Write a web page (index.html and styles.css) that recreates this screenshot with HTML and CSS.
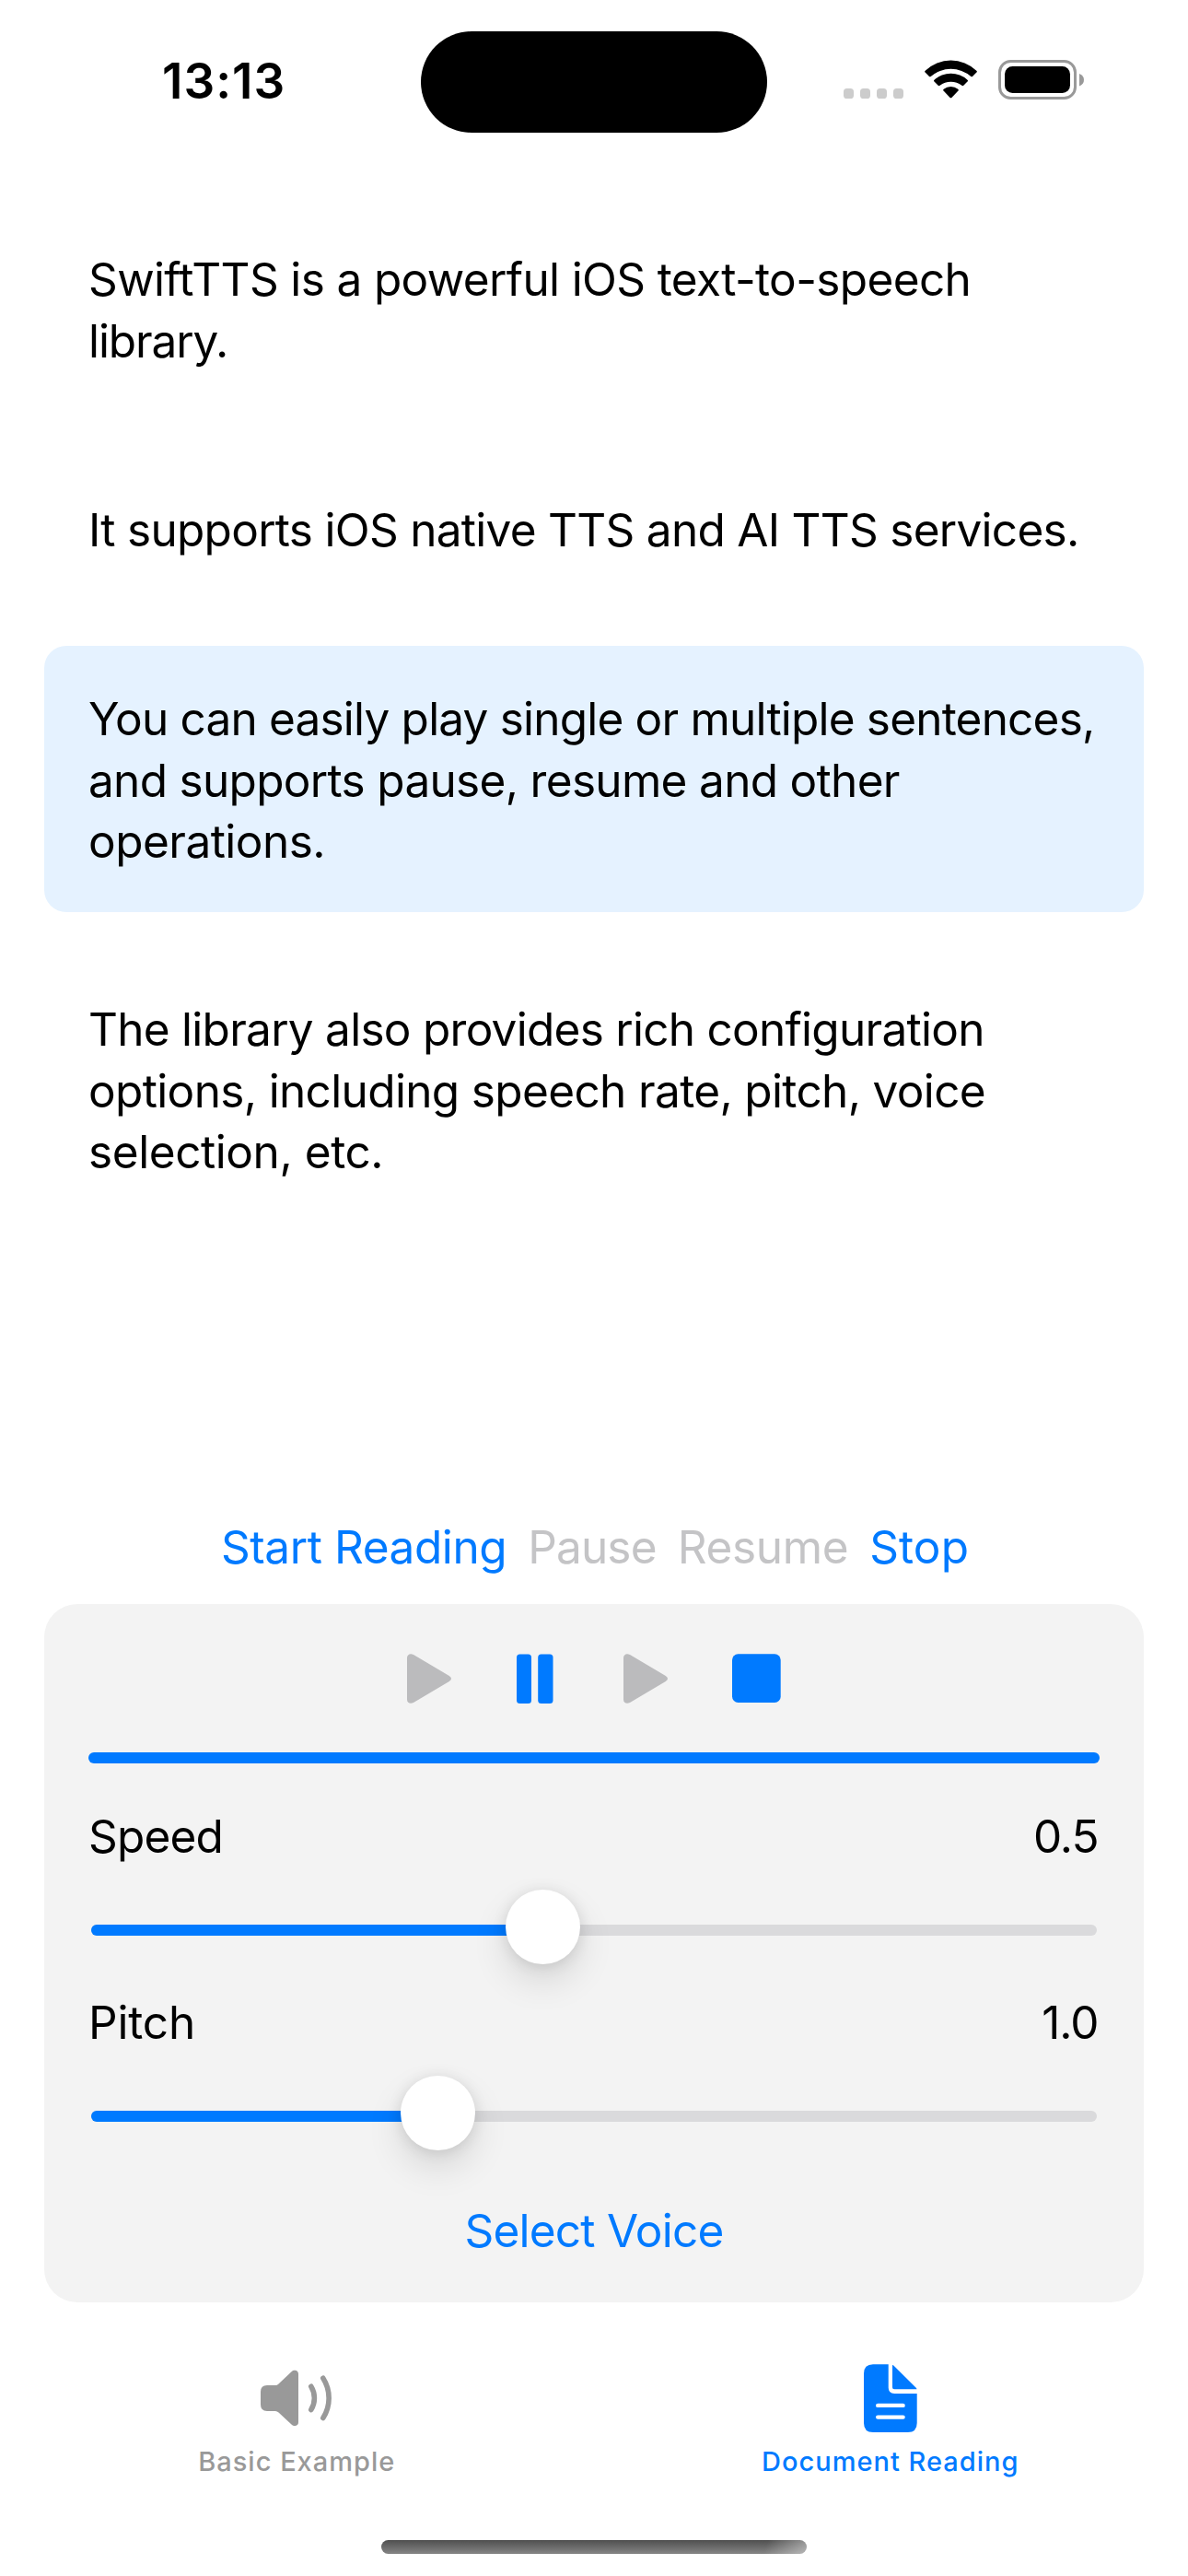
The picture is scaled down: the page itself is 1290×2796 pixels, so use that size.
FILE: index.html
```html
<!DOCTYPE html>
<html lang="en">
<head>
<meta charset="utf-8">
<title>SwiftTTS</title>
<link rel="stylesheet" href="styles.css">
</head>
<body>
<div class="screen">
  <header class="status">
    <div class="time">13:13</div>
    <div class="island"></div>
    <div class="indicators">
      <svg class="dots" width="65" height="11" viewBox="0 0 65 11"><g fill="#ccc"><rect width="11" height="11" rx="3.6"/><rect x="18" width="11" height="11" rx="3.6"/><rect x="36" width="11" height="11" rx="3.6"/><rect x="54" width="11" height="11" rx="3.6"/></g></svg>
      <svg class="wifi" width="57" height="42" viewBox="0 0 57 42"><path d="M.6 13.6Q-.4 12.6.7 11.700A40 40 0 0 1 56.300 11.700Q57.400 12.600 56.400 13.600L52 17.900Q51.200 18.600 50.300 17.900A33.500 33.500 0 0 0 6.700 17.900Q5.800 18.600 5 17.900Z"/><path d="M10.500 23.600Q9.500 22.600 10.500 21.700A27 27 0 0 1 46.500 21.700Q47.500 22.600 46.500 23.600L42.300 27.800Q41.400 28.600 40.400 27.800A19.500 19.500 0 0 0 16.600 27.800Q15.600 28.600 14.700 27.800Z"/><path d="M20.500 33.600Q19.600 32.600 20.700 31.700A12.500 12.500 0 0 1 36.300 31.700Q37.400 32.600 36.500 33.600L29.400 40.900Q28.500 41.700 27.600 40.900Z"/></svg>
      <svg class="battery" width="93" height="43" viewBox="0 0 93 43"><rect x="1.500" y="1.500" width="82" height="40" rx="12" fill="none" stroke="#999" stroke-width="3"/><rect x="7" y="7" width="71" height="29" rx="8.500"/><path d="M88 15Q93 17 93 21.700T88 28.400Z" fill="#999"/></svg>
    </div>
  </header>

  <main class="document">
    <p class="sentence two"><span class="line l1">SwiftTTS is a powerful iOS text-to-speech</span><span class="line l2">library.</span></p>
    <p class="sentence one"><span class="line l3">It supports iOS native TTS and AI TTS services.</span></p>
    <p class="sentence three active"><span class="line l4">You can easily play single or multiple sentences,</span><span class="line l5">and supports pause, resume and other</span><span class="line l6">operations.</span></p>
    <p class="sentence three"><span class="line l7">The library also provides rich configuration</span><span class="line l8">options, including speech rate, pitch, voice</span><span class="line l9">selection, etc.</span></p>
  </main>

  <div class="actions">
    <span class="start">Start Reading</span>
    <span class="pause off">Pause</span>
    <span class="resume off">Resume</span>
    <span class="stop">Stop</span>
  </div>

  <section class="panel">
    <div class="transport">
      <svg width="48" height="54" viewBox="0 0 48 54"><path d="M0 4.500C0 .8 3.500-1 7 1L45.800 24Q50.200 27 45.800 30L7 53C3.500 55 0 53.200 0 49.500Z" fill="#bbbbbd"/></svg>
      <svg width="45" height="54" viewBox="0 0 45 54"><g fill="#007aff"><rect y=".5" width="16" height="53.500" rx="3.500"/><rect x="23.200" y=".5" width="16.300" height="53.500" rx="3.500"/></g></svg>
      <svg width="48" height="54" viewBox="0 0 48 54"><path d="M0 4.500C0 .8 3.500-1 7 1L45.800 24Q50.200 27 45.800 30L7 53C3.500 55 0 53.200 0 49.500Z" fill="#bbbbbd"/></svg>
      <svg class="stop-icon" width="53" height="54" viewBox="0 0 53 54"><rect y=".3" width="52.700" height="52.700" rx="6.500" fill="#007aff"/></svg>
    </div>
    <div class="progress"></div>
    <div class="setting"><span class="speed">Speed</span><span class="value">0.5</span></div>
    <div class="slider"><div class="track"><div class="fill" style="width:490.500px"></div></div><div class="knob" style="left:450px"></div></div>
    <div class="setting second"><span class="pitch">Pitch</span><span class="value">1.0</span></div>
    <div class="slider"><div class="track"><div class="fill" style="width:376.500px"></div></div><div class="knob" style="left:336px"></div></div>
    <div class="voice">Select Voice</div>
  </section>

  <nav class="tabs">
    <div class="tab">
      <svg width="78" height="74" viewBox="0 0 78 74"><path d="M7 23H16Q18 23 19.500 21.500L33.500 8.200C36.500 5.500 41 6.500 41 10.500V63.300C41 67.300 36.500 68.300 33.500 65.600L19.500 52.500Q18 51 16 51H7Q0 51 0 44V30Q0 23 7 23Z" fill="#999"/><path d="M54.800 24.300A24 24 0 0 1 54.800 49.500M67.800 15.300A40 40 0 0 1 67.800 58.500" fill="none" stroke="#999" stroke-width="5.600" stroke-linecap="round"/></svg>
      <span class="label">Basic Example</span>
    </div>
    <div class="tab selected">
      <svg width="58" height="74" viewBox="0 0 58 74"><path d="M10 .3H26.700V25.500Q26.700 32 33.200 32H57.700V64Q57.700 74 47.700 74H10Q0 74 0 64V10.300Q0 .3 10 .3Z" fill="#007aff"/><path d="M31 1Q31.900 1 32.800 1.900L56.500 25.600Q57.300 26.400 57.500 27.200H33Q31 27.200 31 25.200Z" fill="#007aff"/><path d="M15.200 44.900H42.600M15.200 57.600H42.600" stroke="#fff" stroke-width="4.400" stroke-linecap="round"/></svg>
      <span class="label">Document Reading</span>
    </div>
  </nav>
  <div class="home"></div>
</div>
</body>
</html>
```

FILE: styles.css
```css
* { box-sizing: border-box; }

body {
  margin: 0;
  background: #fff;
  color: #000;
  font-family: Inter, "Liberation Sans", sans-serif;
  font-size: 49.5px;
  line-height: 66px;
}

svg { display: block; flex: none; }

.screen {
  display: flex;
  flex-direction: column;
  width: 1290px;
  height: 2796px;
  overflow: hidden;
}

/* Status bar */
.status {
  display: grid;
  grid-template-columns: 457px 376px 457px;
  height: 177px;
}
.time {
  padding: 56px 0 0 176px;
  font-size: 53px;
  font-weight: 600;
  line-height: 64px;
  letter-spacing: 1px;
}
.island {
  height: 110px;
  margin-top: 34px;
  border-radius: 55px;
  background: #000;
}
.indicators {
  display: flex;
  gap: 23px;
  height: 43px;
  margin-top: 65px;
  padding-left: 83px;
}
.dots { align-self: flex-end; margin-bottom: 1px; }

/* Sentences */
.document {
  display: flex;
  flex-direction: column;
  gap: 48px;
  height: 1469px;
  padding: 47px 48px 0;
}
.sentence {
  margin: 0;
  padding: 46px 48px 0;
  border-radius: 24px;
  line-height: 66.5px;
}
.sentence.one { height: 157px; }
.sentence.two { height: 224px; }
.sentence.three { height: 289px; }
.sentence.active { background: #e5f2ff; }
.line { display: block; white-space: nowrap; }
.l1 { letter-spacing: -0.63px; }
.l2 { letter-spacing: -1.11px; }
.l3 { letter-spacing: -0.71px; }
.l4 { letter-spacing: -0.8px; }
.l5 { letter-spacing: -0.68px; }
.l6 { letter-spacing: -0.52px; }
.l7 { letter-spacing: -0.73px; }
.l8 { letter-spacing: -0.64px; }
.l9 { letter-spacing: -0.42px; }

/* Text buttons */
.actions {
  display: flex;
  justify-content: center;
  gap: 23px;
  height: 95px;
  padding-left: 2px;
  color: #007aff;
}
.actions .off { color: #c4c4c6; }
.start { letter-spacing: -0.42px; }
.pause { letter-spacing: -0.83px; }
.resume { letter-spacing: -0.35px; }
.stop { letter-spacing: 0.1px; }

/* Control panel */
.panel {
  height: 758px;
  margin: 0 48px;
  padding: 48px 48px 0;
  border-radius: 36px;
  background: #f3f3f3;
}
.transport {
  display: flex;
  align-items: center;
  justify-content: center;
  gap: 71px;
  height: 66px;
}
.stop-icon { margin-left: -1px; }
.progress {
  height: 12px;
  margin: 47px 0 46px;
  border-radius: 6px;
  background: #007aff;
}
.setting { display: flex; justify-content: space-between; }
.setting.second { margin-top: 30px; }
.speed { letter-spacing: -0.8px; }
.pitch { letter-spacing: -0.15px; }
.value { padding-right: 1.5px; letter-spacing: -1px; }
.slider {
  position: relative;
  height: 81px;
  margin: 25px 3px 0;
  padding-top: 38px;
}
.track {
  height: 12px;
  border-radius: 6px;
  background: #dadadc;
}
.fill {
  height: 12px;
  border-radius: 6px 0 0 6px;
  background: #007aff;
}
.knob {
  position: absolute;
  top: 0;
  width: 81px;
  height: 81px;
  border-radius: 50%;
  background: #fff;
  box-shadow: 0 18px 39px rgba(0, 0, 0, 0.12), 0 2px 16px rgba(0, 0, 0, 0.11);
}
.voice {
  margin-top: 54px;
  color: #007aff;
  text-align: center;
  letter-spacing: -0.77px;
}

/* Tab bar */
.tabs {
  display: grid;
  grid-template-columns: 1fr 1fr;
  height: 258px;
  padding: 67px 1px 0 0;
  color: #999;
}
.tab {
  display: flex;
  flex-direction: column;
  align-items: center;
  gap: 14px;
}
.tab.selected { color: #007aff; }
.label {
  font-size: 29px;
  font-weight: 500;
  line-height: 36px;
  letter-spacing: 1px;
}
.home {
  width: 462px;
  height: 15px;
  margin: 0 auto;
  border-radius: 8px;
  background:
    linear-gradient(105deg, transparent 90%, rgba(255, 255, 255, 0.42) 100%),
    linear-gradient(#4f4f4f, #858585);
}
```
